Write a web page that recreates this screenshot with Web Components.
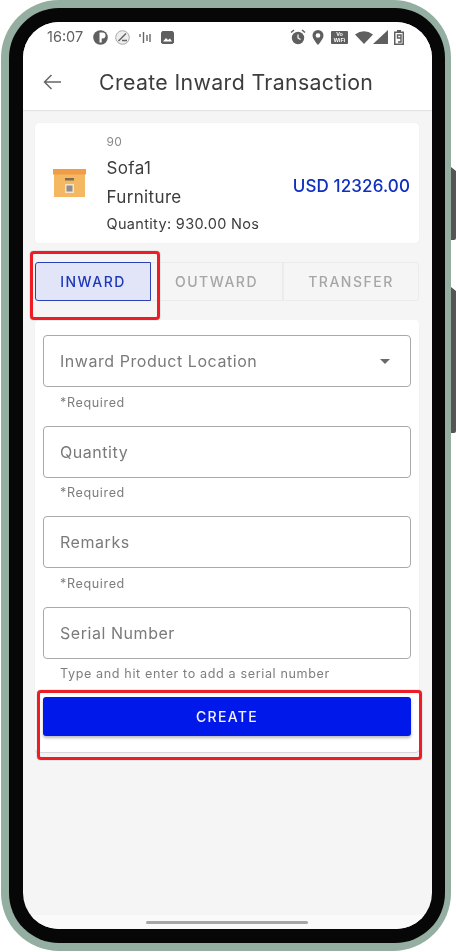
<!DOCTYPE html>
<html lang="en"><head><meta charset="utf-8"><title>Create Inward Transaction</title>
<style>
html,body{margin:0;padding:0;background:#fff}
body{width:456px;height:952px;overflow:hidden;font-family:Inter,"Liberation Sans",sans-serif}
</style></head>
<body>
<phone-frame>
  <status-bar></status-bar>
  <app-header>Create Inward Transaction</app-header>
  <main-area>
    <product-card code="90" name="Sofa1" category="Furniture" qty="Quantity: 930.00 Nos" price="USD 12326.00"></product-card>
    <tab-group></tab-group>
    <form-card>
      <text-field label="Inward Product Location" help="*Required" select></text-field>
      <text-field label="Quantity" help="*Required"></text-field>
      <text-field label="Remarks" help="*Required"></text-field>
      <text-field label="Serial Number" help="Type and hit enter to add a serial number"></text-field>
      <primary-button>CREATE</primary-button>
    </form-card>
  </main-area>
  <home-bar></home-bar>
  <mark-box style="--l:30px;--t:251px;--w:130px;--h:69px"></mark-box>
  <mark-box style="--l:37px;--t:690px;--w:385px;--h:70px"></mark-box>
</phone-frame>
<script>
function el(name, html){
  customElements.define(name, class extends HTMLElement{
    connectedCallback(){
      if(this.shadowRoot) return;
      const r=this.attachShadow({mode:'open'});
      r.innerHTML = typeof html==='function' ? html(this) : html;
    }
  });
}
el('phone-frame',`<style>
:host{display:block;position:relative;width:456px;height:952px;box-sizing:border-box;padding:0 5px 0 1px;filter:blur(.4px)}
.side{position:absolute;right:0;width:5px;background:#555;border-radius:0 2px 2px 0;clip-path:polygon(0 0,100% 4px,100% 100%,0 100%)}
.s1{top:167px;height:73px}.s2{top:287px;height:146px}
.green{height:951px;box-sizing:border-box;background:#94aea2;border-radius:58px;padding:8px 6px 8px 8px}
.black{height:100%;box-sizing:border-box;background:#070707;border-radius:50px;padding:14px 13px 14px 14px}
.screen{height:100%;background:#f5f5f5;border-radius:36px;overflow:hidden;display:flex;flex-direction:column}
</style>
<div class="side s1"></div><div class="side s2"></div>
<div class="green"><div class="black"><div class="screen"><slot></slot></div></div></div>`);
el('status-bar',`<style>
:host{display:flex;align-items:center;height:30px;padding:0 28px 14px 24px;background:#fff;color:#5f5f5f;font-size:14.5px;flex:none}
.t{margin-right:10px;line-height:30px}
svg{display:block;flex:none}
.l{display:flex;align-items:center}
.r{margin-left:auto;display:flex;align-items:center}
.vo{width:17px;height:13px;background:#5f5f5f;color:#fff;font:700 5.5px/6px "Liberation Sans",sans-serif;text-align:center;border-radius:1px;margin:0 7px}
</style>
<div class="l"><span class="t">16:07</span>
<svg width="15" height="15" viewBox="0 0 15 15" style="margin-right:7px"><circle cx="7.5" cy="7.5" r="7.3" fill="#5f5f5f"/><path d="M6.500 2.500h3a3 3 0 0 1 0 6h-.8v4H6.500z" fill="#fff"/></svg>
<svg width="15" height="15" viewBox="0 0 15 15" fill="none" style="margin-right:9px"><circle cx="7.5" cy="7.5" r="6.8" stroke="#a8a8a8" fill="#eee"/><path d="M3.500 11 11 3.500M7 10.500h5" stroke="#666" stroke-width="1.5"/></svg>
<svg width="12" height="13" viewBox="0 0 12 13" fill="none" stroke="#666" stroke-width="1.4" style="margin-right:10px"><path d="M1 3v3M4.500 1v11M8 4v6M11 3v8"/></svg>
<svg width="13" height="13" viewBox="0 0 13 13"><path fill="#5f5f5f" d="M0 1.500 1.500 0h10L13 1.500v10L11.500 13h-10L0 11.500z"/><path fill="#fff" d="m2 10.500 3-3.500 2 2 2-1.500 2 3z"/></svg>
</div>
<div class="r">
<svg width="16" height="16" viewBox="0 0 16 16" style="margin-right:6px"><circle cx="8" cy="9" r="6.200" fill="#5f5f5f"/><path d="M8 5.500V9l2.500 1.500" fill="none" stroke="#fff" stroke-width="1.200"/><path d="M1 3.500 4 1M15 3.500 12 1" stroke="#5f5f5f" stroke-width="1.500"/></svg>
<svg width="12" height="15" viewBox="0 0 12 15"><path fill="#5f5f5f" d="M6 0a5.500 5.500 0 0 1 5.500 5.500C11.500 9 6 15 6 15S.5 9 .5 5.500A5.500 5.500 0 0 1 6 0z"/><circle cx="6" cy="5.500" r="2.300" fill="#fff"/></svg>
<div class="vo">Vo<br>WiFi</div>
<svg width="18" height="13" viewBox="0 0 18 13"><path fill="#5f5f5f" d="M0 3.500Q9-3 18 3.500L9 13z"/></svg>
<svg width="15" height="14" viewBox="0 0 15 14"><path fill="#5f5f5f" d="M15 0v14H0z"/></svg>
<svg width="10" height="15" viewBox="0 0 10 15" style="margin-left:6px"><path fill="#5f5f5f" d="M3 0h4v1.500h3V15H0V1.500h3z"/><path fill="#fff" d="M1.500 3h7v10.500h-7z"/><path fill="none" stroke="#5f5f5f" stroke-width="1.400" d="M7 8H3.500V5H7v7H4"/></svg>
</div>`);
el('app-header',`<style>
:host{display:flex;align-items:center;height:32px;padding-bottom:12px;background:#fff;color:#3c3c3c;flex:none;box-shadow:0 1px 1px #e4e4e4;position:relative}
svg{margin-left:20px;flex:none}
.t{margin-left:38px;font-size:21.3px;font-weight:400;letter-spacing:.36px;white-space:nowrap}
</style>
<svg width="18" height="16" viewBox="0 0 18 16" fill="none" stroke="#666" stroke-width="1.500"><path d="M18 8H1.500M8.500 1 1.500 8l7 7"/></svg>
<span class="t"><slot></slot></span>`);
el('main-area',`<style>
:host{display:block;flex:1;min-height:0;padding:13px 13px 0 12px}
</style><slot></slot>`);
el('product-card',h=>`<style>
:host{display:flex;align-items:center;box-sizing:border-box;height:120px;background:#fff;border-radius:4px;color:#3c3c3c;box-shadow:0 0 1px #e2e2e2}
svg{margin-left:18px;flex:none}
.c{margin-left:20.500px;display:flex;flex-direction:column;align-self:stretch}
.code{font-size:12px;color:#8a8a8a;line-height:15px;margin-top:11px;letter-spacing:.3px}
.name{font-size:17px;line-height:20px;margin-top:9px;letter-spacing:.35px}
.cat{font-size:17px;line-height:20px;margin-top:9px;letter-spacing:.35px}
.q{font-size:14.5px;line-height:18px;margin-top:8px;letter-spacing:.33px}
.p{margin-left:auto;margin-right:9px;color:#0f2fc0;font-size:17px;font-weight:500;letter-spacing:.12px;position:relative;top:3px}
</style>
<svg width="33" height="28" viewBox="0 0 33 28"><rect x="1" y="3" width="31" height="25" fill="#f5b862"/><rect width="33" height="5.500" fill="#ef9e45"/><rect x="12" y="9" width="9" height="2.500" fill="#7d6a52"/><rect x="12" y="15" width="9" height="9" fill="#f7e5cb"/><rect x="13.500" y="16.500" width="6" height="6" fill="#8d8d8d"/></svg>
<div class="c"><span class="code">${h.getAttribute('code')}</span><span class="name">${h.getAttribute('name')}</span><span class="cat">${h.getAttribute('category')}</span><span class="q">${h.getAttribute('qty')}</span></div>
<span class="p">${h.getAttribute('price')}</span>`);
el('tab-group',`<style>
:host{display:flex;height:39px;margin-top:19px;box-sizing:border-box;font-size:14px;font-weight:500;letter-spacing:1.5px}
div{display:flex;align-items:center;justify-content:center;box-sizing:border-box;color:#a6a6a6;border:1px solid #ebebeb;border-left:0;font-weight:500}
.a{width:116px;background:#e1e5f7;color:#1d37b8;border:1.500px solid #2a41b8;border-radius:3px 0 0 3px}
.b{width:132px}.c{flex:1;border-radius:0 3px 3px 0;border-left:1px solid #ebebeb}
</style><div class="a">INWARD</div><div class="b">OUTWARD</div><div class="c">TRANSFER</div>`);
el('form-card',`<style>
:host{display:block;box-sizing:border-box;height:432px;margin-top:19px;padding:15px 8px 0;background:#fff;border-radius:4px;box-shadow:0 1px 1px #d4d4d4}
</style><slot></slot>`);
el('text-field',h=>`<style>
:host{display:block;height:90.500px}
.b{box-sizing:border-box;height:52px;border:1px solid #a9a9a9;border-radius:4px;display:flex;align-items:center;padding:0 20px 0 16px;color:#7a7a7a;font-size:16px;letter-spacing:.55px}
.a{margin-left:auto;width:0;height:0;border:5px solid transparent;border-top-color:#6a6a6a;border-bottom:0}
.h{font-size:12.6px;line-height:15px;margin:7.500px 0 0 17px;color:#7d7d7d;letter-spacing:.62px;white-space:nowrap}
</style><div class="b"><span>${h.getAttribute('label')}</span>${h.hasAttribute('select')?'<span class="a"></span>':''}</div><div class="h">${h.getAttribute('help')}</div>`);
el('primary-button',`<style>
:host{display:flex;align-items:center;justify-content:center;height:39px;background:#0019ea;color:#f2f2ff;border-radius:3px;font-size:14px;font-weight:500;letter-spacing:1.300px;box-shadow:0 2px 3px #bbb}
</style><slot></slot>`);
el('home-bar',`<style>
:host{display:block;height:14px;flex:none;background:#fafafa;position:relative}
i{display:block;position:absolute;left:123px;top:6px;width:162px;height:3px;border-radius:2px;background:#a6a6a6}
</style><i></i>`);
el('mark-box',`<style>
:host{position:absolute;left:var(--l);top:var(--t);width:var(--w);height:var(--h);box-sizing:border-box;border:3px solid #ee1c25;border-radius:4px;box-shadow:0 0 1px #555;pointer-events:none}
</style>`);
</script>
</body></html>
